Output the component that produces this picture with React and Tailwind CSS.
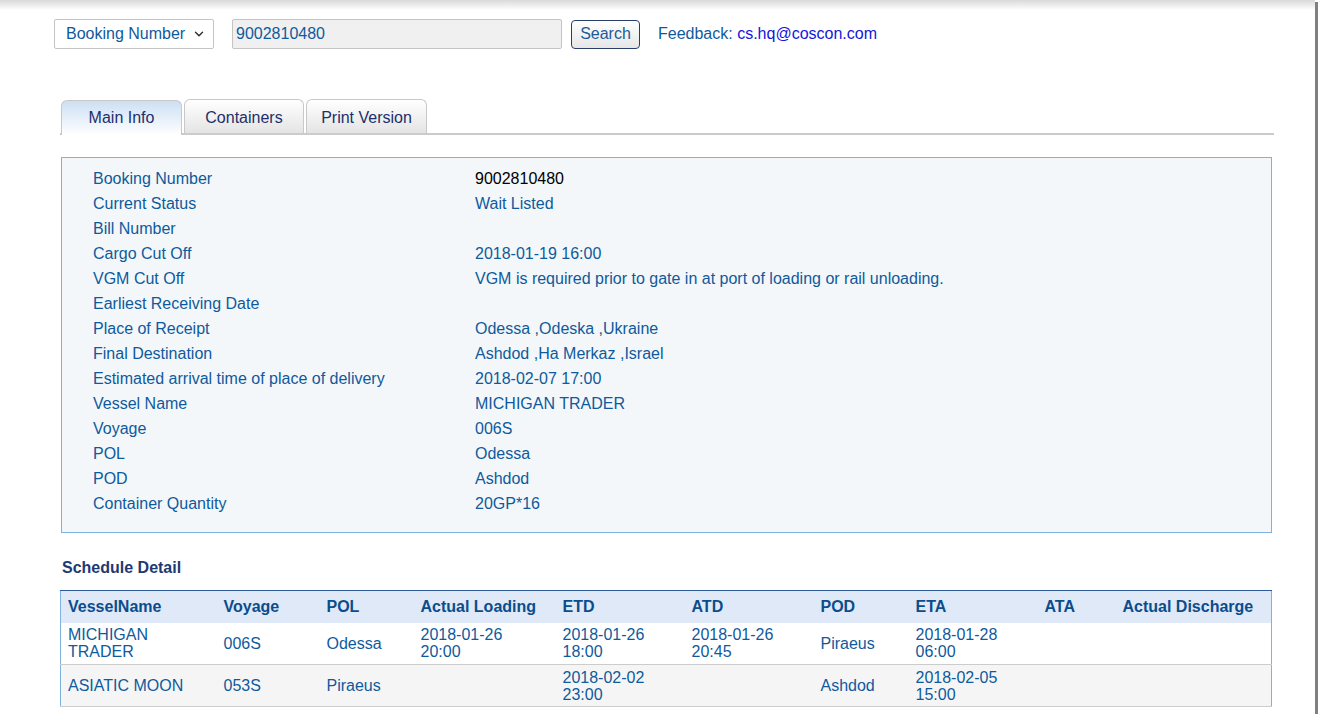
import { ChevronDown } from "lucide-react";

const info = [
  ["Booking Number", "9002810480", true],
  ["Current Status", "Wait Listed"],
  ["Bill Number", ""],
  ["Cargo Cut Off", "2018-01-19 16:00"],
  ["VGM Cut Off", "VGM is required prior to gate in at port of loading or rail unloading."],
  ["Earliest Receiving Date", ""],
  ["Place of Receipt", "Odessa ,Odeska ,Ukraine"],
  ["Final Destination", "Ashdod ,Ha Merkaz ,Israel"],
  ["Estimated arrival time of place of delivery", "2018-02-07 17:00"],
  ["Vessel Name", "MICHIGAN TRADER"],
  ["Voyage", "006S"],
  ["POL", "Odessa"],
  ["POD", "Ashdod"],
  ["Container Quantity", "20GP*16"],
];

const cols = [
  ["VesselName", "w-[155px]"],
  ["Voyage", "w-[103px]"],
  ["POL", "w-[94px]"],
  ["Actual Loading", "w-[142px]"],
  ["ETD", "w-[129px]"],
  ["ATD", "w-[129px]"],
  ["POD", "w-[95px]"],
  ["ETA", "w-[129px]"],
  ["ATA", "w-[78px]"],
  ["Actual Discharge", "w-[157px]"],
];

const rows = [
  [["MICHIGAN", "TRADER"], ["006S"], ["Odessa"], ["2018-01-26", "20:00"], ["2018-01-26", "18:00"], ["2018-01-26", "20:45"], ["Piraeus"], ["2018-01-28", "06:00"], [], []],
  [["ASIATIC MOON"], ["053S"], ["Piraeus"], [], ["2018-02-02", "23:00"], [], ["Ashdod"], ["2018-02-05", "15:00"], [], []],
];

export default function App() {
  return (
    <div className="flex h-[714px] w-[1320px] overflow-hidden bg-white font-['Liberation_Sans',Arial,sans-serif] text-[16px] text-[#0f5a9c]">

      {/* ================= PAGE ================= */}

      <div className="relative w-[1315px]">

        <div className="absolute inset-x-0 top-0 h-[10px] bg-gradient-to-b from-[#d9d9d9] to-white" />

        {/* SEARCH BAR */}

        <div className="relative flex items-center pl-[54px] pt-[19px]">

          <div className="flex h-[30px] w-[160px] items-center justify-between rounded-[2px] border border-[#c4c4c4] bg-white pl-[11px] pr-[7px]">
            <span>Booking Number</span>
            <ChevronDown size={14} strokeWidth={2.5} className="text-[#333]" />
          </div>

          <div className="ml-[18px] flex h-[30px] w-[330px] items-center rounded-[2px] border border-[#c4c4c4] bg-[#f0f0f0] pl-[3px]">
            9002810480
          </div>

          <button className="ml-[9px] h-[29px] w-[69px] rounded-[4px] border border-[#283f6e] bg-gradient-to-b from-white to-[#e6e6e6] text-[#1c5b98]">
            Search
          </button>

          <div className="ml-[18px] mt-[-1px]">
            Feedback:{" "}
            <span className="text-[#1414dc]">cs.hq@coscon.com</span>
          </div>

        </div>

        {/* TABS */}

        <div className="ml-[60px] mt-[51px] flex h-[35px] w-[1214px] items-end border-b-2 border-[#cbcbcb] pl-[1px]">

          <div className="mb-[-2px] flex h-[35px] w-[121px] items-center justify-center rounded-t-[6px] border border-b-0 border-[#c8c8c8] bg-gradient-to-b from-[#cddff3] to-white text-[#1d2f6b]">
            Main Info
          </div>

          <div className="ml-[2px] flex h-[34px] w-[120px] items-center justify-center rounded-t-[6px] border border-b-0 border-[#c8c8c8] bg-gradient-to-b from-white to-[#e4e4e4] pt-[3px] text-[#1d2f6b]">
            Containers
          </div>

          <div className="ml-[2px] flex h-[34px] w-[121px] items-center justify-center rounded-t-[6px] border border-b-0 border-[#c8c8c8] bg-gradient-to-b from-white to-[#e4e4e4] pt-[3px] text-[#1d2f6b]">
            Print Version
          </div>

        </div>

        {/* MAIN INFO */}

        <div className="ml-[61px] mt-[22px] w-[1211px] border border-[#7fb2df] bg-[#f3f7fa] pb-[16px] pl-[31px] pt-[8px]">

          {info.map(([label, value, black]) => (
            <div key={label} className="flex h-[25px] items-center">
              <div className="w-[382px]">{label}</div>
              <div className={black ? "text-black" : ""}>{value}</div>
            </div>
          ))}

        </div>

        {/* SCHEDULE */}

        <div className="ml-[62px] mt-[23px] font-bold text-[#1d3a72]">
          Schedule Detail
        </div>

        <table className="ml-[60px] mt-[10px] w-[1211px] table-fixed border-collapse border-l border-r border-[#7fb2df]">

          <thead>
            <tr className="h-[32px] border-t border-[#2d5a9b] bg-[#dfe9f8] text-left text-[#0b4d8c]">
              {cols.map(([c, w], j) => (
                <th
                  key={c}
                  className={`${w} ${j === 0 ? "pl-[7px]" : "pl-[8px]"} pr-[8px] font-bold`}
                >
                  {c}
                </th>
              ))}
            </tr>
          </thead>

          <tbody>
            {rows.map((r, i) => (
              <tr
                key={i}
                className={`h-[42px] border-b border-[#cccccc] ${i === 1 ? "bg-[#f5f5f5]" : "bg-white"}`}
              >
                {r.map((lines, j) => (
                  <td
                    key={j}
                    className={`${j === 0 ? "pl-[7px]" : "pl-[8px]"} pr-[8px] align-middle leading-[17px]`}
                  >
                    {lines.map((l) => (
                      <div key={l}>{l}</div>
                    ))}
                  </td>
                ))}
              </tr>
            ))}
          </tbody>

        </table>

      </div>

      {/* ================= EDGE ================= */}

      <div className="mt-[2px] w-[3px] bg-[#808080]" />

    </div>
  );
}
